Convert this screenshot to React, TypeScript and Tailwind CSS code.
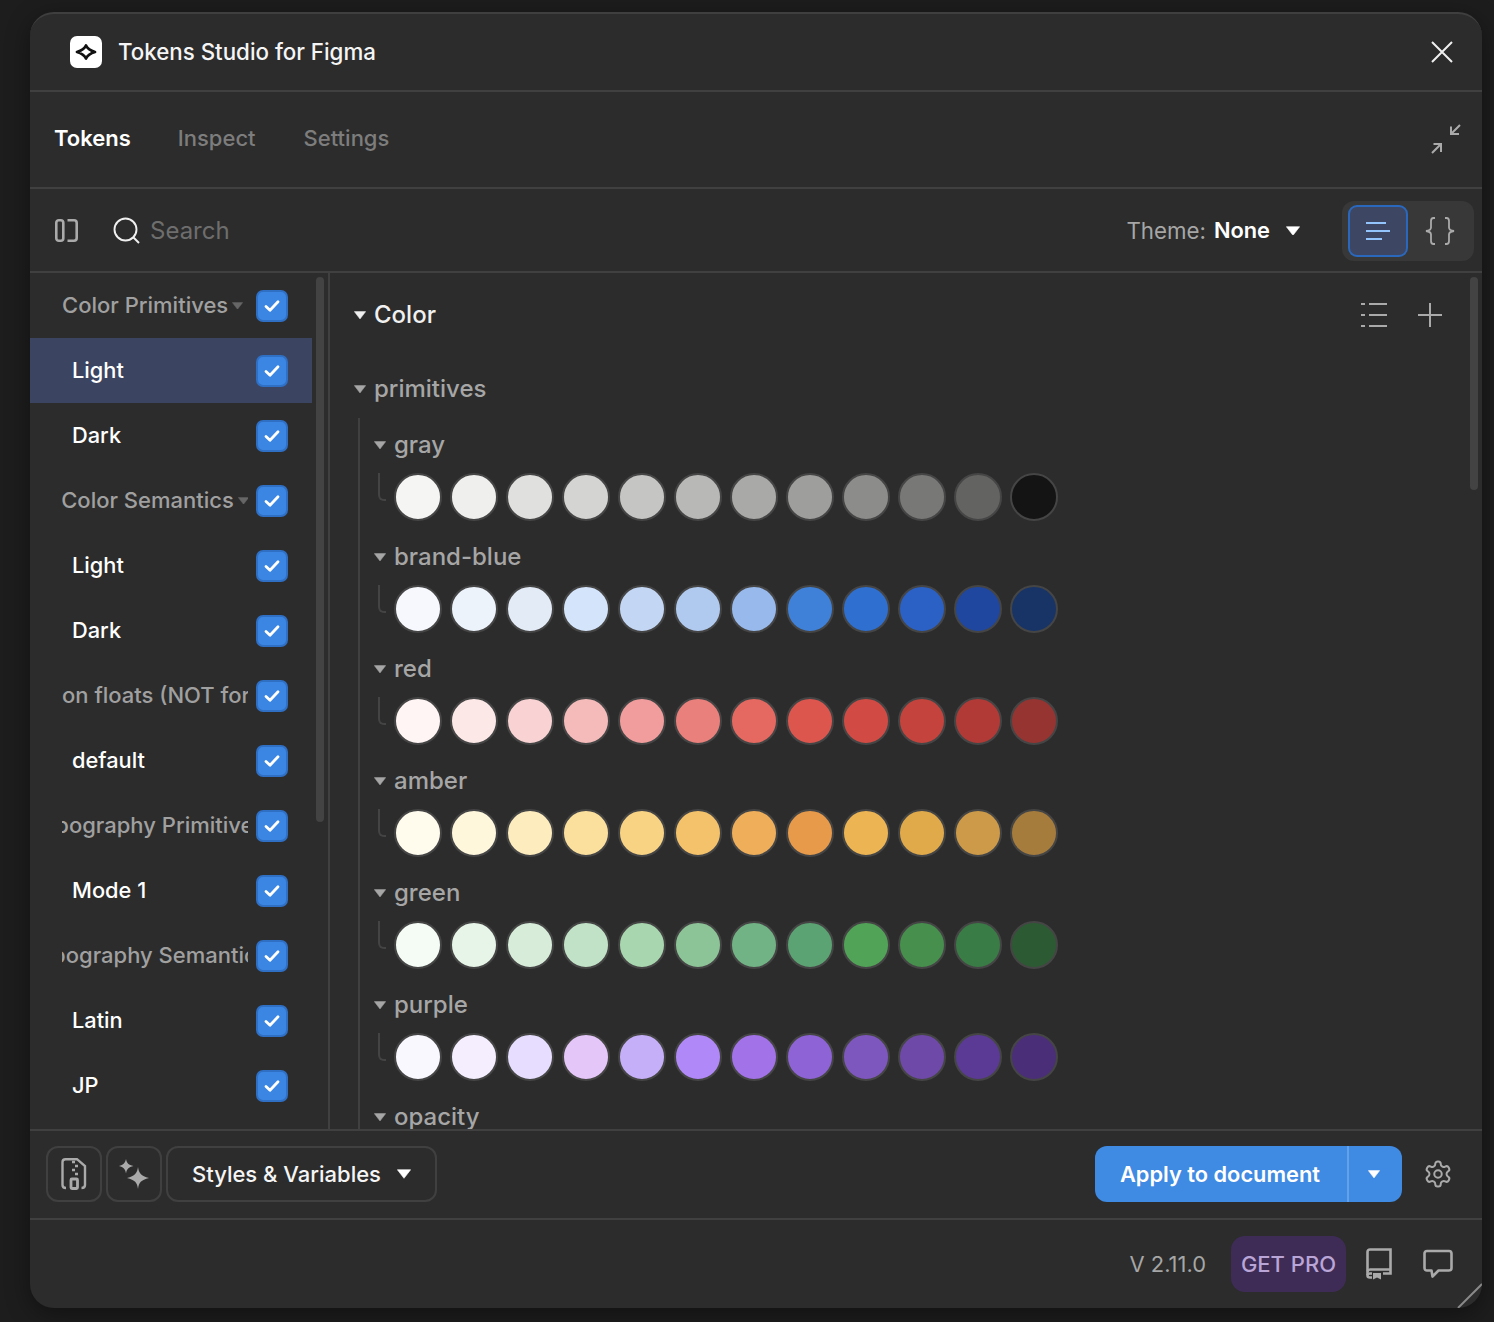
const rows = [
  { name: "gray", colors: ["#f5f5f4","#efefed","#e0e0de","#d4d4d2","#c5c5c3","#b8b8b6","#a9a9a7","#9e9e9c","#8c8c8a","#787876","#636361","#151415"] },
  { name: "brand-blue", colors: ["#f6f8fd","#edf3fb","#e3ebf7","#d4e4fa","#c3d7f5","#b0caef","#98b9ec","#3f81d8","#2f6fd0","#2b60c5","#1f47a0","#183466"] },
  { name: "red", colors: ["#fff5f4","#fde8e8","#f9d3d3","#f5baba","#f29d9d","#ea807c","#e56960","#dd564e","#d14b44","#c4433c","#b23a36","#963432"] },
  { name: "amber", colors: ["#fffcee","#fef7dc","#fdecbe","#fbdf9c","#f8d384","#f4c26a","#eeae5a","#e69a4a","#ecb452","#e0aa4b","#cc9a48","#a67c3c"] },
  { name: "green", colors: ["#f4fcf5","#e6f5e8","#d7edda","#c2e2c7","#a8d6ae","#8dc497","#72b385","#5ba372","#51a457","#468f4d","#3a7c45","#2c5b33"] },
  { name: "purple", colors: ["#faf8ff","#f4eeff","#e7deff","#e4c6f8","#c6aff9","#b188f8","#a272e8","#8d63d6","#7e57be","#6e49a8","#5a3a94","#4a2f78"] },
];

type SetItem = { label: string; group?: boolean; caret?: boolean; center?: boolean; active?: boolean };

const sets: SetItem[] = [
  { label: "Color Primitives", group: true, caret: true },
  { label: "Light", active: true },
  { label: "Dark" },
  { label: "Color Semantics", group: true, caret: true, center: true },
  { label: "Light" },
  { label: "Dark" },
  { label: "on floats (NOT for", group: true },
  { label: "default" },
  { label: "Typography Primitives", group: true, caret: true, center: true },
  { label: "Mode 1" },
  { label: "Typography Semantics", group: true, caret: true, center: true },
  { label: "Latin" },
  { label: "JP" },
];

function Caret({ w = 12, color = "#a6a6a6" }: { w?: number; color?: string }) {
  return (
    <svg width={w} height={w * 0.7} viewBox="0 0 12 8.4" className="shrink-0">
      <path d="M0.3 0.6H11.7L6 8Z" fill={color} stroke={color} strokeWidth="0.5" strokeLinejoin="round" />
    </svg>
  );
}

function Check() {
  return (
    <div className="flex h-[32px] w-[32px] shrink-0 items-center justify-center rounded-[7px] border-2 border-[#2f6fc4] bg-[#3b86e3]">
      <svg width="16" height="14" viewBox="0 0 16 14" fill="none">
        <path d="M2 7.5L6 11.2L14 2.8" stroke="#fff" strokeWidth="2.8" strokeLinecap="round" strokeLinejoin="round" />
      </svg>
    </div>
  );
}

function SetRow({ s }: { s: SetItem }) {
  return (
    <div className={`flex h-[65px] items-center pr-[24px] ${s.active ? "bg-[#3b4460]" : ""}`}>
      {s.group ? (
        <div className={`ml-[32px] flex w-[186px] items-center gap-[4px] overflow-hidden ${s.center ? "justify-center" : "justify-start"}`}>
          <span className="shrink-0 whitespace-nowrap text-[22px] font-medium text-[#a0a0a0]">{s.label}</span>
          {s.caret && <Caret w={11} color="#666666" />}
        </div>
      ) : (
        <span className="ml-[42px] w-[176px] whitespace-nowrap text-[21.8px] font-medium text-white">{s.label}</span>
      )}
      <div className="ml-[8px]">
        <Check />
      </div>
    </div>
  );
}

function Swatches({ name, colors }: { name: string; colors: string[] }) {
  return (
    <div className="h-[112px] shrink-0">
      <div className="flex h-[55px] items-center gap-[8px] pb-[1px]">
        <Caret />
        <span className="text-[24px] font-medium text-[#a6a6a6]">{name}</span>
      </div>
      <div className="flex">
        <div className="ml-[4px] mr-[8px] h-[28px] w-[8px] rounded-bl-[6px] border-b-2 border-l-2 border-[#444444]" />
        <div className="flex gap-[8px]">
          {colors.map((c, i) => (
            <div key={i} className="h-[48px] w-[48px] rounded-full border-2 border-[#454545]" style={{ backgroundColor: c }} />
          ))}
        </div>
      </div>
    </div>
  );
}

const line = "#aaaaaa";

export default function App() {
  return (
    <div className="h-[1322px] w-[1494px] overflow-hidden bg-[#1d1d1d] pl-[30px] pt-[12px] font-['Inter',sans-serif]">
      <div className="relative flex h-[1296px] w-[1452px] flex-col overflow-hidden rounded-[24px] border-t-2 border-[#3f3f3f] bg-[#2c2c2c] shadow-[0_6px_24px_rgba(0,0,0,0.4)]">
        {/* Title */}
        <div className="flex h-[78px] shrink-0 items-center border-b-2 border-[#404040] pl-[40px] pr-[29px]">
          <svg width="32" height="32" viewBox="0 0 32 32" className="shrink-0">
            <rect width="32" height="32" rx="7" fill="#fff" />
            <path d="M16 9.5C17.5 13 20 14.5 25 16C20 17.5 17.5 19 16 22.5C14.5 19 12 17.5 7 16C12 14.5 14.5 13 16 9.5Z" fill="#fff" stroke="#111" strokeWidth="2.8" strokeLinejoin="round" />
          </svg>
          <span className="ml-[16px] text-[22.3px] font-medium text-[#f5f5f5]">Tokens Studio for Figma</span>
          <svg width="22" height="22" viewBox="0 0 22 22" className="ml-auto" fill="none">
            <path d="M1 1L21 21M21 1L1 21" stroke="#f0f0f0" strokeWidth="2" />
          </svg>
        </div>

        {/* Tabs */}
        <div className="flex h-[97px] shrink-0 items-center border-b-2 border-[#404040] pb-[3px] pl-[24px] pr-[20px]">
          <span className="text-[22px] font-semibold text-white">Tokens</span>
          <span className="ml-[47px] text-[22px] font-medium text-[#7d7d7d]">Inspect</span>
          <span className="ml-[48px] text-[22px] font-medium text-[#7d7d7d]">Settings</span>
          <svg width="32" height="32" viewBox="0 0 32 32" className="ml-auto translate-y-[1px]" fill="none" stroke={line} strokeWidth="2">
            <path d="M30 2L21 11M21 3.5V11H29" />
            <path d="M2 30L11 21M3.5 21H11V29" />
          </svg>
        </div>

        {/* Toolbar */}
        <div className="flex h-[84px] shrink-0 items-center border-b-2 border-[#404040] pl-[25px] pr-[8px] pt-[1px]">
          <svg width="23" height="23" viewBox="0 0 23 23" fill="none" stroke={line} strokeWidth="2.6">
            <rect x="1.3" y="1.3" width="7" height="20.4" rx="2.5" />
            <path d="M12.5 1.3H19C20.6 1.3 21.7 2.4 21.7 4V19C21.7 20.6 20.6 21.7 19 21.7H12.5" />
          </svg>
          <svg width="27" height="27" viewBox="0 0 27 27" className="ml-[35px]" fill="none" stroke="#f0f0f0" strokeWidth="1.9">
            <circle cx="12.5" cy="12.5" r="11" />
            <path d="M20.5 20.5L26 26" />
          </svg>
          <span className="ml-[10px] text-[24px] text-[#6e6e6e]">Search</span>
          <span className="ml-auto text-[22.3px] text-[#a6a6a6]">Theme:</span>
          <span className="ml-[8px] text-[21.8px] font-semibold text-white">None</span>
          <div className="ml-[16px]"><Caret w={14} color="#ffffff" /></div>
          <div className="ml-[42px] flex h-[60px] w-[132px] items-center rounded-[12px] bg-[#383838] pl-[6px]">
            <div className="flex h-[52px] w-[60px] items-center justify-center rounded-[9px] border-2 border-[#2a68bd] bg-[#3d4663]">
              <svg width="26" height="20" viewBox="0 0 26 20" stroke="#93c4fb" strokeWidth="2">
                <path d="M1 2H21M1 10H25M1 18H17" />
              </svg>
            </div>
            <svg width="30" height="28" viewBox="0 0 30 28" className="ml-[17px]" fill="none" stroke={line} strokeWidth="1.8">
              <path d="M10 1H8.5C6.5 1 6 2.5 6 4V10.5C6 12.5 4.5 13.5 1 14C4.5 14.5 6 15.5 6 17.5V24C6 25.5 6.5 27 8.5 27H10" />
              <path d="M20 1H21.5C23.5 1 24 2.5 24 4V10.5C24 12.5 25.5 13.5 29 14C25.5 14.5 24 15.5 24 17.5V24C24 25.5 23.5 27 21.5 27H20" />
            </svg>
          </div>
        </div>

        {/* Main */}
        <div className="flex min-h-0 flex-1">
          <div className="flex w-[300px] shrink-0 overflow-hidden border-r-2 border-[#404040]">
            <div className="w-[282px] shrink-0">
              {sets.map((s, i) => <SetRow key={i} s={s} />)}
            </div>
            <div className="ml-[4px] mt-[4px] h-[545px] w-[8px] rounded-full bg-[#434343]" />
          </div>
          <div className="flex min-w-0 flex-1 overflow-hidden">
            <div className="flex min-w-0 flex-1 flex-col overflow-hidden pl-[24px]">
              <div className="flex h-[84px] shrink-0 items-center gap-[8px] pr-[23px]">
                <Caret color="#f0f0f0" />
                <span className="text-[24px] font-medium text-[#f0f0f0]">Color</span>
                <svg width="26" height="26" viewBox="0 0 26 26" className="ml-auto" stroke={line} strokeWidth="2">
                  <path d="M0 2H4M8 2H26M0 13H4M8 13H26M0 24H4M8 24H26" />
                </svg>
                <svg width="26" height="26" viewBox="0 0 26 26" className="ml-[22px]" stroke={line} strokeWidth="2">
                  <path d="M13 1V25M1 13H25" />
                </svg>
              </div>
              <div className="flex h-[61px] shrink-0 items-start gap-[8px]">
                <div className="flex h-[64px] items-center"><Caret /></div>
                <span className="flex h-[64px] items-center text-[24px] font-medium text-[#a6a6a6]">primitives</span>
              </div>
              <div className="ml-[4px] flex-1 border-l-2 border-[#404040] pl-[14px]">
                {rows.map((r) => <Swatches key={r.name} name={r.name} colors={r.colors} />)}
                <div className="flex h-[54px] items-center gap-[8px]">
                  <Caret />
                  <span className="text-[24px] font-medium text-[#a6a6a6]">opacity</span>
                </div>
              </div>
            </div>
            <div className="ml-[4px] mr-[4px] mt-[4px] h-[213px] w-[8px] rounded-full bg-[#434343]" />
          </div>
        </div>

        {/* Actions */}
        <div className="flex h-[91px] shrink-0 items-center gap-[4px] border-y-2 border-[#404040] pb-[1px] pl-[16px] pr-[29px]">
          <div className="flex h-[56px] w-[56px] items-center justify-center rounded-[12px] border-2 border-[#404040]">
            <svg width="26" height="32" viewBox="0 0 26 32" fill="none" stroke={line} strokeWidth="2.4">
              <path d="M5 30C2.5 30 1.5 29 1.5 27V4C1.5 2 2.5 1.2 4.5 1.2H16L24 8V27C24 29 23 30 20.5 30" />
              <path d="M11 4H14M14 8H17M11 12H14M14 16H17" strokeWidth="2.6" />
              <rect x="10" y="21" width="6.5" height="9.5" rx="1" strokeWidth="2.8" />
            </svg>
          </div>
          <div className="flex h-[56px] w-[56px] items-center justify-center rounded-[12px] border-2 border-[#404040]">
            <svg width="30" height="30" viewBox="0 0 30 30" fill={line}>
              <path d="M7 0C7.8 4 9.5 6 14.5 7C9.5 8 7.8 10 7 14.5C6.2 10 4.5 8 -0.5 7C4.5 6 6.2 4 7 0Z" />
              <path d="M19 8C19.8 14 22 17 30 19C22 21 19.8 23.5 19 30C18.2 23.5 16 21 8 19C16 17 18.2 14 19 8Z" />
            </svg>
          </div>
          <div className="flex h-[56px] w-[271px] items-center rounded-[12px] border-2 border-[#404040] pl-[24px]">
            <span className="text-[22px] font-medium text-[#f5f5f5]">Styles &amp; Variables</span>
            <div className="ml-[16px]"><Caret w={14} color="#ffffff" /></div>
          </div>
          <div className="ml-auto flex h-[56px] w-[307px] items-center rounded-[12px] bg-[#3f8ae2]">
            <span className="flex h-full w-[254px] items-center justify-center border-r-2 border-[#63a1e9] pr-[2px] text-[21.8px] font-semibold text-white">Apply to document</span>
            <div className="ml-[19px]"><Caret w={12} color="#ffffff" /></div>
          </div>
          <svg width="30" height="30" viewBox="0 0 24 24" className="ml-[17px]" fill="none" stroke={line} strokeWidth="1.6" strokeLinejoin="round">
            <path d="M12.22 2h-.44a2 2 0 0 0-2 2v.18a2 2 0 0 1-1 1.73l-.43.25a2 2 0 0 1-2 0l-.15-.08a2 2 0 0 0-2.73.73l-.22.38a2 2 0 0 0 .73 2.73l.15.1a2 2 0 0 1 1 1.72v.51a2 2 0 0 1-1 1.74l-.15.09a2 2 0 0 0-.73 2.73l.22.38a2 2 0 0 0 2.73.73l.15-.08a2 2 0 0 1 2 0l.43.25a2 2 0 0 1 1 1.73V20a2 2 0 0 0 2 2h.44a2 2 0 0 0 2-2v-.18a2 2 0 0 1 1-1.73l.43-.25a2 2 0 0 1 2 0l.15.08a2 2 0 0 0 2.73-.73l.22-.39a2 2 0 0 0-.73-2.73l-.15-.08a2 2 0 0 1-1-1.74v-.5a2 2 0 0 1 1-1.74l.15-.09a2 2 0 0 0 .73-2.73l-.22-.38a2 2 0 0 0-2.73-.73l-.15.08a2 2 0 0 1-2 0l-.43-.25a2 2 0 0 1-1-1.73V4a2 2 0 0 0-2-2z" />
            <circle cx="12" cy="12" r="3" />
          </svg>
        </div>

        {/* Status */}
        <div className="flex h-[88px] min-h-0 shrink-0 items-center pr-[29px]">
          <span className="ml-auto text-[21.9px] text-[#a6a6a6]">V 2.11.0</span>
          <div className="ml-[25px] flex h-[56px] w-[115px] items-center justify-center rounded-[14px] bg-[#3e2c57] text-[22px] font-medium text-[#b9a5d6]">GET PRO</div>
          <svg width="26" height="32" viewBox="0 0 26 32" className="ml-[20px]" fill="none" stroke={line} strokeWidth="2.6">
            <path d="M1.5 27V4C1.5 2.5 2.5 1.5 4 1.5H24.5V25.5H17" />
            <path d="M6 25.5H4C2.5 25.5 1.5 26.5 1.5 27.5C1.5 29 2.5 29.5 4 29.5H6" />
            <path d="M1.5 23.5C2 22.5 3 21.5 4 21.5H24.5" />
            <path d="M7 25H15V31.5L11 29.5L7 31.5Z" fill={line} stroke="none" />
          </svg>
          <svg width="30" height="30" viewBox="0 0 30 30" className="ml-[31px]" fill="none" stroke={line} strokeWidth="2.6" strokeLinejoin="round">
            <path d="M4 2H26C27.5 2 28.5 3 28.5 4.5V19C28.5 20.5 27.5 21.5 26 21.5H15.5L9.5 27.5L8.5 21.5H4C2.5 21.5 1.5 20.5 1.5 19V4.5C1.5 3 2.5 2 4 2Z" />
          </svg>
        </div>

        {/* Resize handle */}
        <svg width="26" height="26" viewBox="0 0 26 26" className="absolute bottom-0 right-0" stroke="#8a8a8a" strokeWidth="2">
          <path d="M2 26L26 2" />
        </svg>
      </div>
    </div>
  );
}
